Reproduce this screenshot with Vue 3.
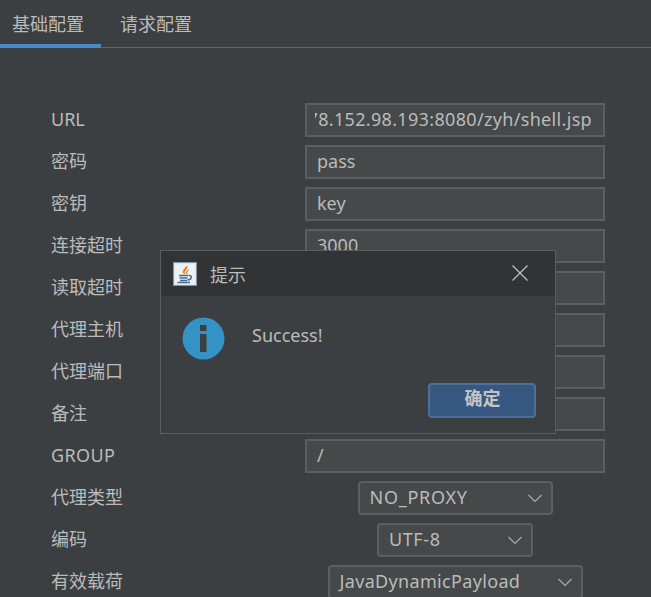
<script setup>
const textRows = [
  ['URL', '78.152.98.193:8080/zyh/shell.jsp', true],
  ['密码', 'pass'],
  ['密钥', 'key'],
  ['连接超时', '3000'],
  ['读取超时', '60000'],
  ['代理主机', '127.0.0.1'],
  ['代理端口', '8888'],
  ['备注', '备注'],
  ['GROUP', '/'],
]
const selectRows = [
  ['代理类型', 'NO_PROXY', 195, 0.75],
  ['编码', 'UTF-8', 156, 0.6],
  ['有效载荷', 'JavaDynamicPayload', 255, 0.33],
]
</script>

<template>
  <div class="page">
    <div class="tabs">
      <div class="tab active">基础配置</div>
      <div class="tab">请求配置</div>
    </div>
    <div class="form">
      <div v-for="r in textRows" :key="r[0]" class="row">
        <div class="label" :class="{ caps: r[0] === 'GROUP' }">{{ r[0] }}</div>
        <div class="field" :class="{ clip: r[2] }"><div class="inner"><span>{{ r[1] }}</span></div></div>
      </div>
      <div v-for="r in selectRows" :key="r[0]" class="row">
        <div class="label">{{ r[0] }}</div>
        <div class="selwrap">
          <div class="select" :style="{ width: r[2] + 'px' }">
            <span class="value" :style="{ letterSpacing: r[3] + 'px' }">{{ r[1] }}</span>
            <svg width="14" height="9" viewBox="0 0 14 9"><path d="M0.5 1 L7 7.5 L13.5 1" fill="none" stroke="#a9abad" stroke-width="1.2"/></svg>
          </div>
        </div>
      </div>
    </div>

    <div class="dialog">
      <div class="titlebar">
        <svg class="java" width="24" height="24" viewBox="0 0 24 24">
          <rect x="0.5" y="0.5" width="23" height="23" fill="#dfe5ea" stroke="#7f98b0"/>
          <rect x="2" y="2" width="20" height="20" fill="#eef0f2"/>
          <path d="M14 4 C15 7 10.5 8.5 11.5 12 C8.5 10 11 7 14 4 Z M15.5 7.5 C14.5 9.5 13.5 10 14 12 C12.8 10.5 13.5 9 15.5 7.5 Z" fill="#e8791c" stroke="#e8791c" stroke-width="0.6"/>
          <path d="M6 13.5 H15 M6.5 16 H14.5 M7 18.5 H14 M4.5 20.5 H17" stroke="#456f96" stroke-width="1.5" fill="none"/>
          <path d="M15.5 13.5 C19.5 13 19.5 17.5 14.5 18" stroke="#456f96" stroke-width="1.4" fill="none"/>
        </svg>
        <span class="title">提示</span>
        <svg class="close" width="16" height="16" viewBox="0 0 16 16"><path d="M0.5 0.5 L15.5 15.5 M15.5 0.5 L0.5 15.5" stroke="#c4c6c8" stroke-width="1.1"/></svg>
      </div>
      <div class="body">
        <svg class="info" width="43" height="43" viewBox="0 0 43 43">
          <circle cx="21.5" cy="21.5" r="21" fill="#3592c4"/>
          <rect x="18" y="8" width="6.5" height="6" fill="#3c3f41"/>
          <rect x="18" y="17" width="6.5" height="18" fill="#3c3f41"/>
        </svg>
        <span class="msg">Success!</span>
      </div>
      <div class="foot"><div class="btn">确定</div></div>
    </div>
  </div>
</template>

<style scoped>
.page {
  position: relative;
  width: 651px;
  height: 597px;
  overflow: hidden;
  background: #3c3f41;
  color: #bbbbbb;
  font-family: "Noto Sans", "Noto Sans CJK SC", sans-serif;
  font-size: 18px;
}
.tabs {
  display: flex;
  height: 48px;
  box-sizing: border-box;
  border-bottom: 1px solid #646464;
}
.tab {
  width: 110px;
  height: 48px;
  box-sizing: border-box;
  padding-top: 11px;
  line-height: 27px;
  text-align: center;
  white-space: nowrap;
}
.tab.active {
  width: 101px;
  padding-left: 12px;
  text-align: left;
  border-bottom: 4px solid #4a88c7;
}
.form {
  display: flex;
  flex-direction: column;
  gap: 8px;
  padding: 55px 46px 0 51px;
}
.row {
  display: flex;
  align-items: center;
  height: 34px;
  flex: none;
}
.label { width: 254px; flex: none; line-height: 34px; margin-top: -2px; }
.caps { letter-spacing: 0.4px; }
.field {
  width: 300px;
  height: 34px;
  box-sizing: border-box;
  background: #45494a;
  border: 2px solid #5c5f61;
  padding: 0 11px 0 10px;
  line-height: 29px;
  white-space: nowrap;
}
.field.clip { padding-left: 8px; }
.inner {
  display: flex;
  overflow: hidden;
}
.inner span { flex: none; }
.clip .inner {
  justify-content: flex-end;
  letter-spacing: 0.33px;
}
.selwrap { width: 300px; display: flex; justify-content: center; }
.select {
  height: 34px;
  box-sizing: border-box;
  background: #45494a;
  border: 2px solid #5c5f61;
  border-radius: 4px;
  padding: 0 9px 0 10px;
  display: flex;
  align-items: center;
  justify-content: space-between;
}
.value { line-height: 27px; margin-top: -2px; }
.dialog {
  position: absolute;
  left: 160px;
  top: 250px;
  width: 396px;
  height: 184px;
  box-sizing: border-box;
  background: #3c3f41;
  border: 1px solid #5a5d5f;
  display: flex;
  flex-direction: column;
}
.titlebar {
  height: 45px;
  flex: none;
  background: #323335;
  display: flex;
  align-items: center;
  padding: 0 27px 0 12px;
}
.title { margin-left: 13px; }
.close { margin-left: auto; margin-top: -1px; }
.body {
  display: flex;
  align-items: flex-start;
  padding: 21px 0 0 21px;
  height: 87px;
  box-sizing: border-box;
  flex: none;
}
.msg { margin-left: 27px; line-height: 26px; margin-top: 5px; }
.foot { display: flex; justify-content: flex-end; padding-right: 19px; }
.btn {
  width: 108px;
  height: 35px;
  box-sizing: border-box;
  background: #365880;
  border: 2px solid #4c709a;
  border-radius: 4px;
  padding-left: 1px;
  text-align: center;
  line-height: 26px;
  font-weight: 700;
  color: #c4c4c4;
}
</style>
